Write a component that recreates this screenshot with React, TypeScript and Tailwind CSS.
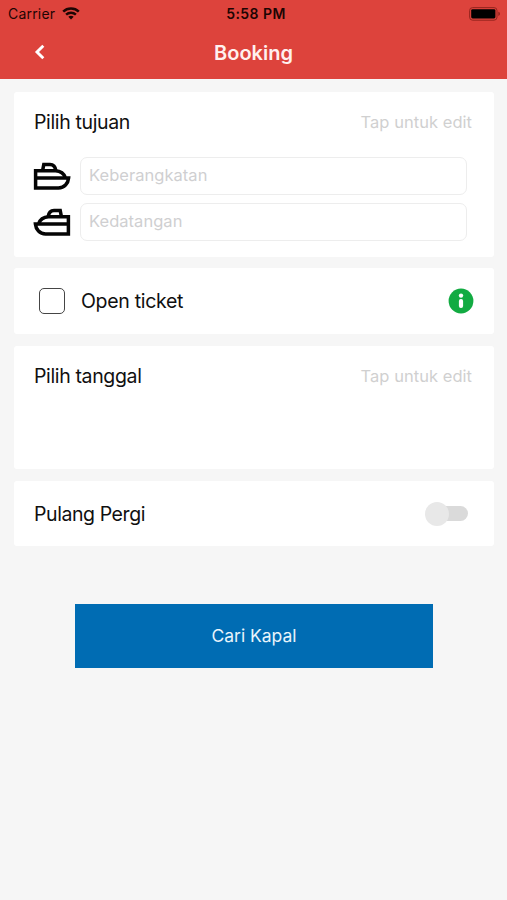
import React, { useState } from 'react';
import clsx from 'clsx';

const ShipIcon = ({ flipped = false }: { flipped?: boolean }) => (
  <svg
    viewBox="0 0 38 30"
    className={clsx('w-[38px] h-[30px] shrink-0', flipped && '-scale-x-100')}
    fill="none"
    stroke="#050505"
    strokeWidth="3.5"
  >
    <path d="M2.6 17H35.6C35.1 22.6 31.3 26.9 25.5 26.9H2.6V9.7H22.5C27.5 9.9 31 12.5 32.6 17" />
    <path d="M9.6 9.7L10.8 3.4H17C20.3 3.4 22.4 6 22.9 9.7" />
  </svg>
);

const WifiIcon = () => (
  <svg viewBox="0 0 18 13" className="w-[18px] h-[13px]" fill="none" stroke="#1d0503" strokeWidth="2.5">
    <path d="M1.2 4.6C5.5 0.5 12.5 0.5 16.8 4.6" />
    <path d="M4.1 7.7C6.9 5.1 11.1 5.1 13.9 7.7" />
    <path d="M9 12.4L6.3 9.8C7.8 8.4 10.2 8.4 11.7 9.8Z" fill="#1d0503" stroke="none" />
  </svg>
);

const BatteryIcon = () => (
  <svg viewBox="0 0 32 14" className="w-8 h-[14px]">
    <rect x="0.6" y="0.6" width="27.4" height="12.6" rx="3" fill="none" stroke="#8c211b" strokeWidth="0.9" />
    <rect x="2.2" y="2.2" width="24.2" height="9.2" rx="1.4" fill="#000" />
    <path d="M29.4 4.8C31.4 5.5 31.4 8.3 29.4 9Z" fill="#8c211b" />
  </svg>
);

const InfoIcon = () => (
  <svg viewBox="0 0 26 26" className="w-[26px] h-[26px]">
    <circle cx="13" cy="13" r="12.4" fill="#12ab42" />
    <circle cx="13" cy="7.6" r="2.2" fill="#fff" />
    <rect x="10.9" y="11" width="4.2" height="9" rx="2" fill="#fff" />
  </svg>
);

const fields = [
  { id: 'departure', placeholder: 'Keberangkatan', flipped: false },
  { id: 'arrival', placeholder: 'Kedatangan', flipped: true }
];

const CardHeader = ({ title }: { title: string }) => (
  <div className="flex items-center justify-between h-[30px]">
    <h2 className="pt-0.5 text-[19.5px] tracking-[-0.36px]">{title}</h2>
    <button className="pt-px text-[16.5px] tracking-[0.04px] text-[#d0d0d0]">Tap untuk edit</button>
  </div>
);

export default function App() {
  const [openTicket, setOpenTicket] = useState(false);
  const [roundTrip, setRoundTrip] = useState(false);

  return (
    <div className="w-full h-[900px] overflow-hidden bg-[#f6f6f6] text-[#101010] font-['Inter',sans-serif]">
      <header className="h-[79px] bg-[#dd433c]">
        {/* Status bar */}
        <div className="grid grid-cols-3 items-center h-[27px] pl-2 pr-[6px] text-[#1d0503]">
          <div className="flex items-center gap-[7px] text-[14px] tracking-[0.2px]">
            <span>Carrier</span>
            <WifiIcon />
          </div>
          <span className="pl-[3px] text-center text-[14px] font-semibold tracking-[0.45px]">5:58 PM</span>
          <div className="flex justify-end">
            <BatteryIcon />
          </div>
        </div>

        {/* Nav bar */}
        <div className="grid grid-cols-[80px_1fr_80px] items-center h-[52px]">
          <button className="pl-[34px] pb-0.5">
            <svg viewBox="0 0 12 16" className="w-3 h-4" fill="none" stroke="#fff" strokeWidth="2.9">
              <path d="M9.3 1.8L3 8L9.3 14.2" />
            </svg>
          </button>
          <h1 className="text-center text-[20px] font-semibold text-[#fff0ef]">Booking</h1>
        </div>
      </header>

      <main className="flex flex-col gap-3 px-[14px] pt-[13px] pr-[13px]">
        <section className="h-[165px] -mb-px rounded-[3px] bg-white pt-[15px] pl-5 pr-[22px]">
          <CardHeader title="Pilih tujuan" />
          <div className="flex flex-col gap-2 pt-5 pr-[5px]">
            {fields.map((field) => (
              <div key={field.id} className="flex items-center gap-[9px] -ml-px">
                <ShipIcon flipped={field.flipped} />
                <input
                  type="text"
                  placeholder={field.placeholder}
                  className="flex-1 min-w-0 h-[38px] px-2 pb-0.5 rounded-[7px] border border-[#ededed] text-[16.5px] tracking-[0.04px] placeholder:text-[#cfcfd1] focus:outline-none"
                />
              </div>
            ))}
          </div>
        </section>

        <section className="flex items-center h-[66px] rounded-[3px] bg-white pl-[25px] pr-5">
          <button
            className="w-[26px] h-[26px] rounded-[5px] border-[1.5px] border-[#454545] text-sm leading-none"
            onClick={() => setOpenTicket(!openTicket)}
          >
            {openTicket && '✓'}
          </button>
          <span className="flex-1 pt-0.5 pl-4 text-[19.5px] tracking-[-0.3px]">Open ticket</span>
          <InfoIcon />
        </section>

        <section className="h-[123px] rounded-[3px] bg-white pt-[15px] pl-5 pr-[22px]">
          <CardHeader title="Pilih tanggal" />
        </section>

        <section className="flex items-center justify-between h-[65px] rounded-[3px] bg-white pl-5 pr-[26px]">
          <span className="pt-0.5 text-[19.5px] tracking-[-0.42px]">Pulang Pergi</span>
          <button
            className={clsx('flex items-center w-[43px] h-6', roundTrip && 'rotate-180')}
            onClick={() => setRoundTrip(!roundTrip)}
          >
            <span className="z-10 w-6 h-6 rounded-full bg-[#e8e8e8]" />
            <span className="flex-1 h-[15px] -ml-2 rounded-r-full bg-[#dadada]" />
          </button>
        </section>

        <button className="w-[358px] h-16 mt-[46px] ml-[61px] pt-px bg-[#006cb3] text-[17.5px] text-[#e9f4fb]">
          Cari Kapal
        </button>
      </main>
    </div>
  );
}
